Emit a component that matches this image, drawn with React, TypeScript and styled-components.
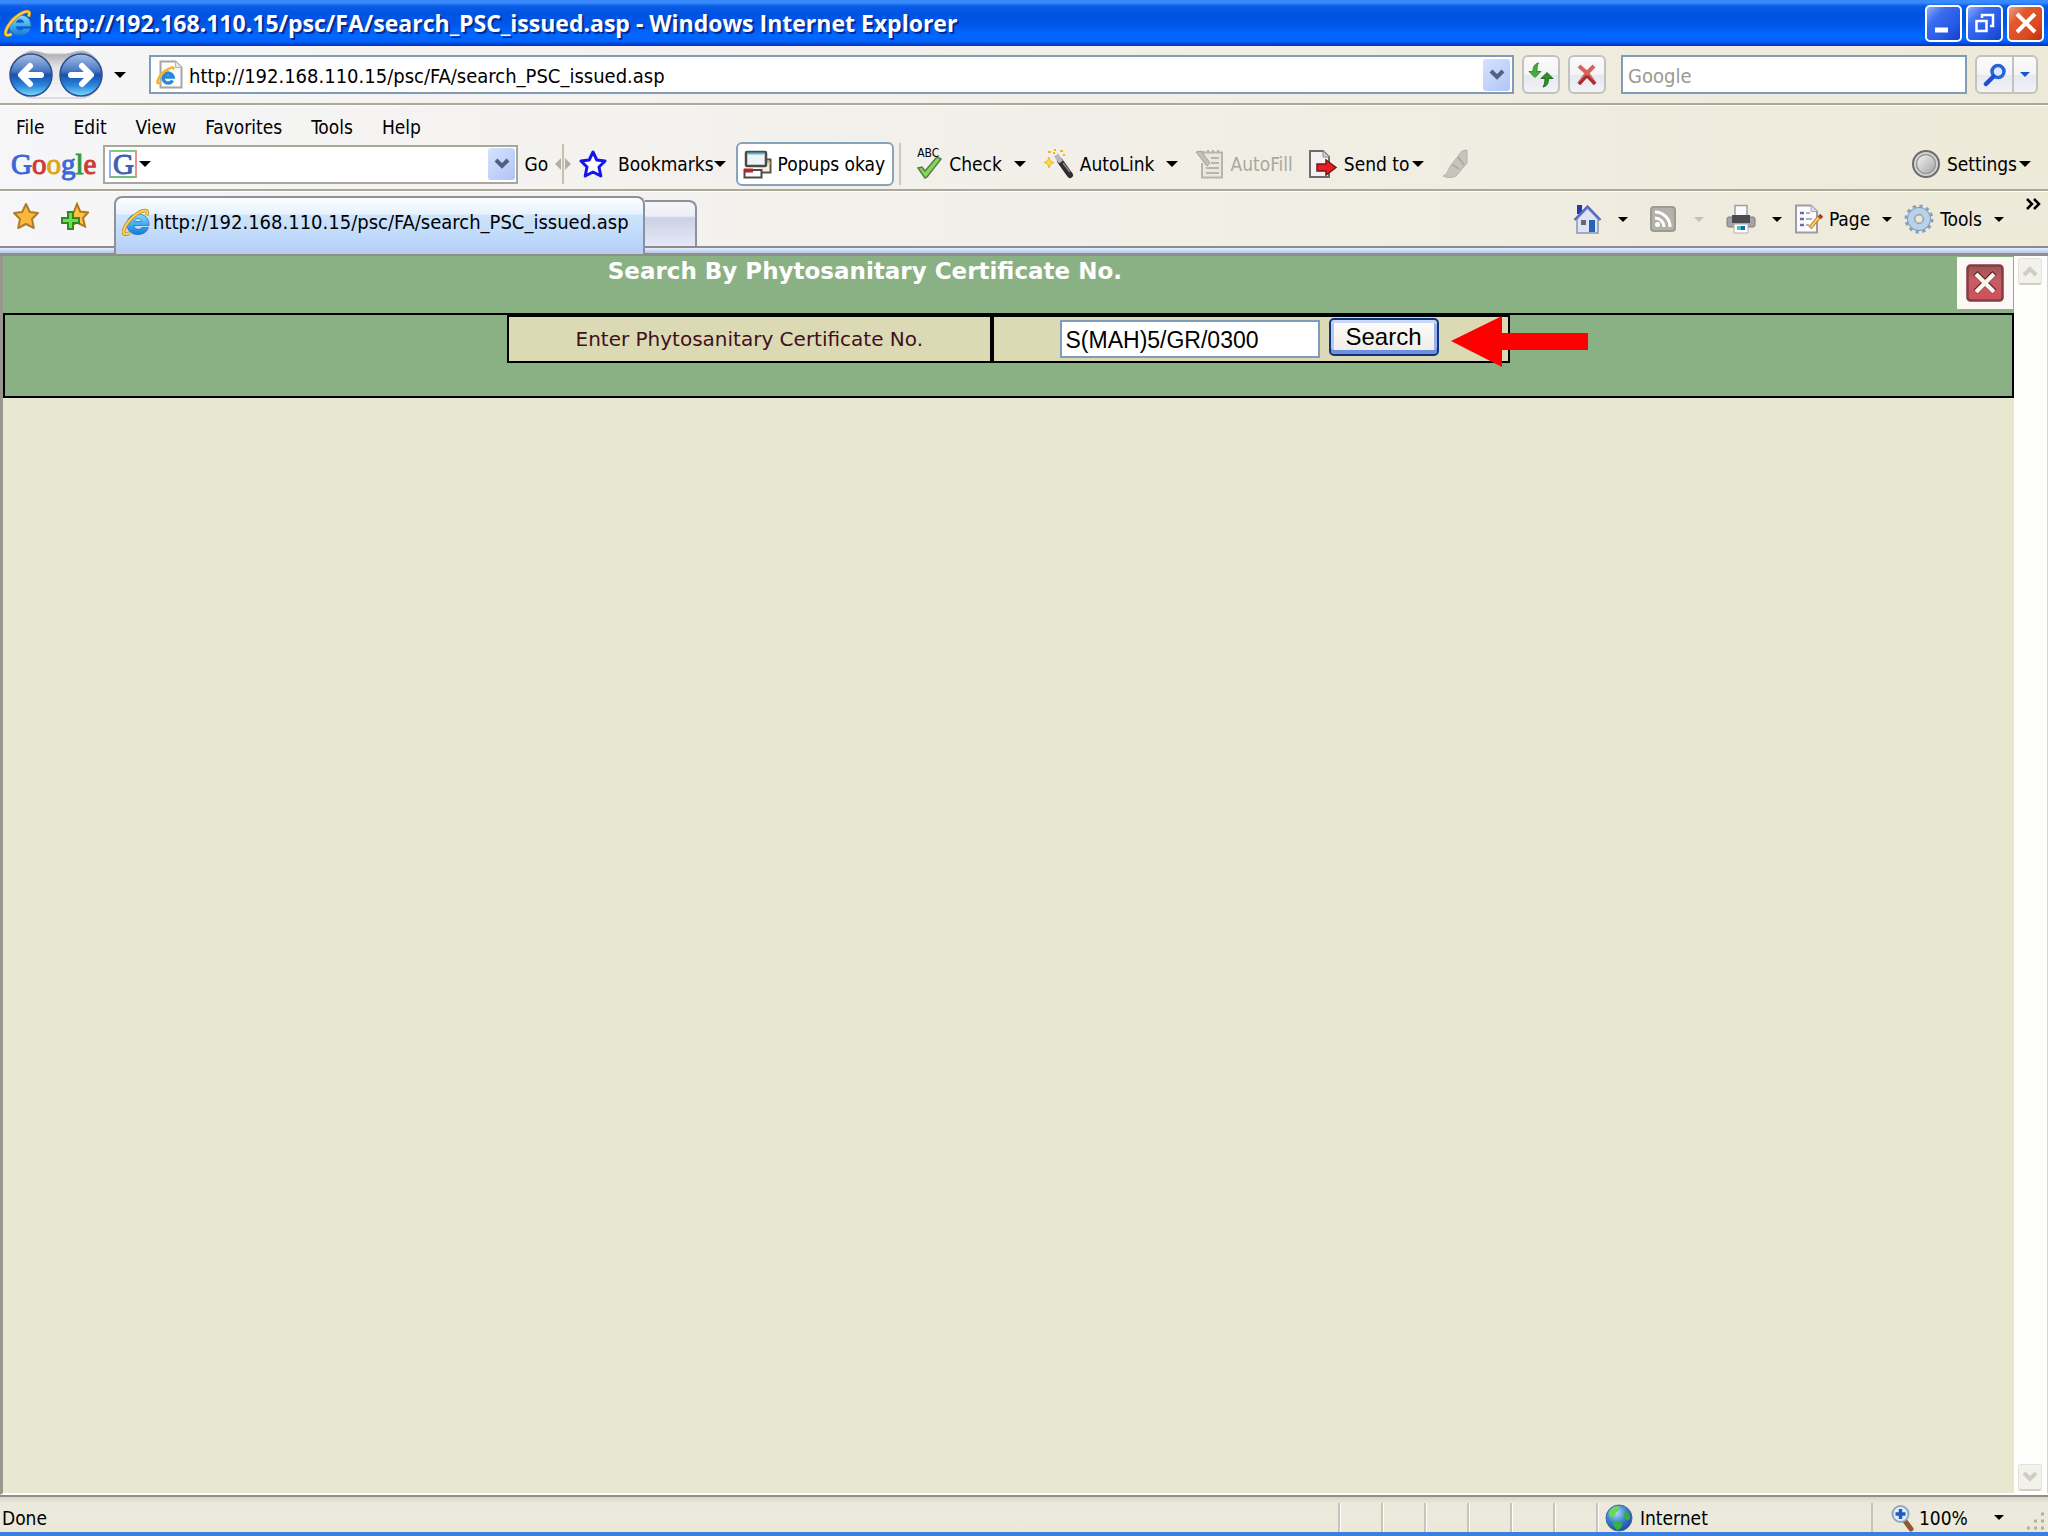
import React from "react";
import styled, { createGlobalStyle, css } from "styled-components";

const uiFont = `"DejaVu Sans Condensed", "Noto Sans", sans-serif`;
const titleFont = `"Open Sans", "Noto Sans", sans-serif`;
const pageFont = `"DejaVu Sans", Verdana, sans-serif`;
const arial = `"Liberation Sans", Arial, sans-serif`;

const GlobalStyle = createGlobalStyle`
  *, *::before, *::after { box-sizing: border-box; }
  body { margin: 0; background: #e8e7d0; }
  button, input { font: inherit; color: inherit; margin: 0; padding: 0; border: 0; background: none; border-radius: 0; }
  input { outline: 0; min-width: 0; }
  svg { display: block; flex: none; }
`;

const Window = styled.div`
  display: flex;
  flex-direction: column;
  min-height: 100vh;
  font-family: ${uiFont};
  font-size: 19px;
  line-height: 24px;
  color: #000;
  white-space: nowrap;
`;

/* ---------- title bar ---------- */

const TitleBar = styled.header`
  display: flex;
  align-items: center;
  height: 46px;
  padding: 0 4px;
  background: linear-gradient(to bottom, #3a8bff 0, #3688fa 3px, #0a5be8 6px, #0053e0 14px, #0056e8 24px, #0066ff 34px, #0066ff 41px, #0038c8 45px, #003ad0 46px);
`;

const Title = styled.h1`
  flex: 1;
  margin: 0 0 0 7px;
  font-family: ${titleFont};
  font-weight: 700;
  font-size: 23px;
  line-height: 32px;
  color: #fff;
  text-shadow: 2px 2px 0 #0a2a8a;
`;

const WindowButtons = styled.div`
  display: flex;
  gap: 4px;
`;

const WindowButton = styled.button<{ $close?: boolean }>`
  display: grid;
  place-items: center;
  width: 37px;
  height: 37px;
  border: 2px solid #fff;
  border-radius: 5px;
  background: ${(p) =>
    p.$close
      ? "linear-gradient(135deg, #f0a08a 0, #e2582f 30%, #dc4a20 70%, #b83010 100%)"
      : "linear-gradient(135deg, #8fb0f8 0, #3a6cf0 30%, #2458e6 70%, #1a3fc0 100%)"};
`;

/* ---------- bars ---------- */

const bar = css`
  display: flex;
  align-items: center;
  background: linear-gradient(to right, #f6f6f8 0, #f2f0ea 45%, #efecdf 80%, #eeead9 100%);
`;

const NavBar = styled.div`
  ${bar}
  height: 59px;
  padding: 0 10px 0 8px;
  border-bottom: 2px solid #aca899;
`;

const Triangle = styled.span<{ $size?: number; $color?: string }>`
  flex: none;
  width: 0;
  height: 0;
  border: ${(p) => p.$size ?? 6}px solid transparent;
  border-top-color: ${(p) => p.$color ?? "#000"};
  border-bottom: 0;
`;

const PlainButton = styled.button<{ $left?: number }>`
  display: flex;
  align-items: center;
  height: 40px;
  margin-left: ${(p) => p.$left ?? 0}px;
`;

const FieldBox = styled.label<{ $edge: string }>`
  display: flex;
  align-items: center;
  height: 39px;
  padding: 0 2px 0 5px;
  border: 2px solid ${(p) => p.$edge};
  background: #fff;
`;

const AddressBox = styled(FieldBox)`
  flex: 1;
  margin-left: 23px;
`;

const SearchBox = styled(FieldBox)`
  width: 346px;
  margin: 0 8px 0 15px;
`;

const GoogleBox = styled(FieldBox)`
  width: 415px;
  margin-left: 7px;
  padding: 0 1px 0 4px;
`;

const Field = styled.input`
  flex: 1;
  height: 30px;
  padding: 2px 0 0 6px;
  font-size: 20px;
  &::placeholder { color: #9a9a90; opacity: 1; }
`;

const SearchField = styled(Field)`
  padding-left: 0;
`;

const ComboArrow = styled.button`
  display: grid;
  place-items: center;
  width: 27px;
  height: 32px;
  border-radius: 3px;
  background: linear-gradient(135deg, #d6e2fd 0, #c0d0fa 60%, #b0c4f4 100%);
`;

const SmallButton = styled.button`
  display: grid;
  place-items: center;
  width: 38px;
  height: 39px;
  margin-left: 8px;
  border: 2px solid #c2c2c0;
  border-radius: 6px;
  background: linear-gradient(to bottom, #fbfbfb 0, #f4f4f6 50%, #e6e8f0 52%, #f2f2f6 100%);
`;

const SplitButton = styled.div`
  display: flex;
  height: 39px;
  border: 2px solid #c2c2c0;
  border-radius: 6px;
  background: linear-gradient(to bottom, #fbfbfb 0, #f4f4f6 50%, #e6e8f0 52%, #f2f2f6 100%);
`;

const SplitPart = styled.button<{ $wide?: boolean }>`
  display: grid;
  place-items: center;
  width: ${(p) => (p.$wide ? 37 : 22)}px;
  border-right: ${(p) => (p.$wide ? "2px solid #c2c2c0" : "0")};
`;

const MenuBar = styled.nav`
  ${bar}
  gap: 29px;
  height: 37px;
  padding: 6px 16px 0;
  border-top: 1px solid #fff;
`;

const GoogleBar = styled.div`
  ${bar}
  height: 49px;
  padding: 0 17px 3px 11px;
  border-bottom: 2px solid #aca899;
`;

const Logo = styled.span`
  font-family: "Liberation Serif", "Times New Roman", serif;
  font-size: 29px;
  line-height: 36px;
  -webkit-text-stroke: 1px currentColor;
`;

const Letter = styled.span<{ $c: string }>`
  color: ${(p) => p.$c};
`;

const GBadge = styled.span`
  display: grid;
  place-items: center;
  width: 28px;
  height: 28px;
  margin-right: 2px;
  border: 2px solid;
  border-color: #7cc98a #f0908a #6fc07c #8fb0f0;
  font-family: "Liberation Serif", "Times New Roman", serif;
  font-size: 29px;
  line-height: 24px;
  color: #3c5fb8;
  -webkit-text-stroke: 1px currentColor;
`;

const Separator = styled.span`
  width: 2px;
  height: 42px;
  margin: 0 12px 0 5px;
  background: #cdcabb;
`;

const Splitter = styled.span`
  margin: 0 8px 0 7px;
`;

const Tool = styled.button<{ $gap?: number; $left?: number; $disabled?: boolean }>`
  display: flex;
  align-items: center;
  gap: ${(p) => p.$gap ?? 6}px;
  height: 44px;
  margin-left: ${(p) => p.$left ?? 0}px;
  color: ${(p) => (p.$disabled ? "#aaa89c" : "#000")};
`;

const PressedTool = styled(Tool)`
  padding: 0 7px 0 5px;
  border: 2px solid #86a5bd;
  border-radius: 6px;
  background: #fff;
`;

const Caret = styled(Triangle)<{ $left?: number }>`
  margin-left: ${(p) => p.$left ?? 0}px;
`;

const Push = styled.span`
  flex: 1;
`;

/* ---------- tab row ---------- */

const TabRow = styled.div`
  ${bar}
  align-items: stretch;
  height: 57px;
  border-top: 1px solid #fff;
  border-bottom: 2px solid #8a8c90;
  padding-left: 12px;
`;

const TabIcons = styled.div`
  display: flex;
  align-items: center;
  gap: 21px;
  width: 102px;
  padding-bottom: 6px;
`;

const Tab = styled.button`
  display: flex;
  align-items: center;
  gap: 3px;
  width: 531px;
  height: 58px;
  margin-top: 4px;
  padding: 0 8px 8px 6px;
  border: 2px solid #8c929c;
  border-bottom: 0;
  border-radius: 8px 8px 0 0;
  background: linear-gradient(to bottom, #fdfefe 0, #e8f3fd 28%, #cfe4fa 31%, #bcd8fa 75%, #b9cbf2 100%);
  font-size: 20px;
  position: relative;
`;

const NewTab = styled.button`
  width: 52px;
  margin-top: 8px;
  border: 2px solid #8c929c;
  border-left: 0;
  border-bottom: 0;
  border-radius: 0 8px 0 0;
  background: linear-gradient(to bottom, #f6f6fa 0, #eeeef6 32%, #ccd0e4 36%, #e6e8f8 100%);
`;

const CommandBar = styled.div`
  display: flex;
  flex: 1;
  align-items: center;
  justify-content: flex-end;
  padding: 0 7px 0 0;
`;

const Command = styled.button<{ $left: number; $gap: number }>`
  display: flex;
  align-items: center;
  gap: ${(p) => p.$gap}px;
  height: 40px;
  margin-left: ${(p) => p.$left}px;
`;

const IconText = styled.span`
  display: flex;
  align-items: center;
  gap: 6px;
`;

const Overflow = styled.button`
  align-self: flex-start;
  margin-left: 22px;
  padding-top: 6px;
`;

const TabShelf = styled.div`
  height: 8px;
  border-bottom: 3px solid #8f8f86;
  background: linear-gradient(to bottom, #e6effc, #b4c6f0);
`;

/* ---------- document ---------- */

const Viewport = styled.main`
  display: flex;
  flex: 1;
  border-left: 3px solid #9a968c;
  border-bottom: 2px solid #fff;
  background: #e8e7d0;
`;

const Document = styled.div`
  flex: 1;
  font-family: ${pageFont};
`;

const Heading = styled.div`
  display: grid;
  grid-template-columns: 6fr 1fr;
  height: 57px;
  background: #8ab184;
`;

const HeadingText = styled.h2`
  margin: 0;
  font-size: 23px;
  line-height: 30px;
  font-weight: 700;
  text-align: center;
  color: #fff;
`;

const CloseCell = styled.div`
  display: flex;
  justify-content: flex-end;
  padding: 1px 1px 0 0;
`;

const CloseButton = styled.button`
  display: grid;
  place-items: center;
  width: 56px;
  height: 52px;
  background: #fbf8f6;
`;

const Panel = styled.section`
  height: 85px;
  border: 2px solid #000;
  background: #8ab184;
`;

const SearchForm = styled.form`
  display: grid;
  grid-template-columns: 29fr 31fr;
  width: 50%;
  height: 48px;
  margin: 0 auto;
  border: 2px solid #000;
  background: #dbdab4;
`;

const LabelCell = styled.div`
  display: grid;
  place-items: center;
  border-right: 2px solid #000;
  font-size: 20px;
  color: #40101c;
`;

const InputCell = styled.div`
  position: relative;
  display: flex;
  align-items: center;
  justify-content: center;
  gap: 9px;
  padding-right: 4px;
  border-left: 2px solid #000;
  font-family: ${arial};
  font-size: 24px;
`;

const CertInput = styled.input`
  width: 260px;
  height: 38px;
  padding: 2px 4px 0;
  border: 2px solid #7f9db9;
  background: #fff;
  font-size: 23px;
`;

const SubmitButton = styled.button`
  width: 110px;
  height: 38px;
  margin-bottom: 4px;
  border: 2px solid #10347c;
  border-radius: 5px;
  background: linear-gradient(to bottom, #fdfdfb, #eeece4);
  box-shadow: inset 0 3px 0 #c8d8fa, inset 0 -4px 0 #6f8fe0, inset 3px 0 0 #b4c8f6, inset -3px 0 0 #98b0f0;
`;

const Pointer = styled.svg`
  position: absolute;
  left: calc(100% - 57px);
  top: -2px;
`;

const ScrollBar = styled.div`
  display: flex;
  flex-direction: column;
  justify-content: space-between;
  width: 34px;
  padding: 2px 6px 2px 4px;
  border-right: 1px solid #d8d4c4;
  background: #fefefc;
`;

const ScrollButton = styled.button`
  display: grid;
  place-items: center;
  width: 24px;
  height: 27px;
  border: 1px solid #e4e2d6;
  border-bottom: 2px solid #d2d0c0;
  border-radius: 3px;
  background: #f2f1ec;
`;

/* ---------- status bar ---------- */

const StatusBar = styled.footer`
  display: flex;
  align-items: stretch;
  height: 41px;
  border-top: 2px solid #8f8f86;
  border-bottom: 4px solid #3a7fe0;
  padding-left: 2px;
  background: linear-gradient(to bottom, #d6d4c6 0, #ebe9dc 6px, #ebeadb 24px, #eee6d6 100%);
`;

const StatusText = styled.span`
  flex: 1;
  padding-top: 9px;
`;

const Pane = styled.span<{ $w: number }>`
  display: flex;
  align-items: center;
  gap: 7px;
  width: ${(p) => p.$w}px;
  margin-top: 6px;
  padding-left: 7px;
  border-left: 2px solid #c8c5b4;
  box-shadow: inset 1px 0 0 #fff;
`;

const ZoomPane = styled.button`
  display: flex;
  align-items: center;
  gap: 4px;
  width: 153px;
  margin-top: 6px;
  padding-left: 18px;
  border-left: 2px solid #c8c5b4;
`;

const Grip = styled.svg`
  align-self: flex-end;
`;

/* ---------- icons ---------- */

const IEIcon = ({ size = 28, id }: { size?: number; id: string }) => (
  <svg width={size} height={size} viewBox="0 0 28 28" aria-hidden="true">
    <defs>
      <linearGradient id={id} x1="0" y1="0" x2="0" y2="1">
        <stop offset="0" stopColor="#8ad8fc" />
        <stop offset="0.55" stopColor="#3caaf0" />
        <stop offset="1" stopColor="#1a78d4" />
      </linearGradient>
    </defs>
    <path
      d="M27 17.500H12c.3 2.600 2 3.800 4.200 3.800 1.700 0 2.900-.6 3.700-1.800h6.500C25 24 21.300 26.500 16 26.500 9.600 26.500 5 22.600 5 16.400 5 10.100 9.600 6 16 6c6.800 0 11.300 4.400 11 11.500zM12.200 13.600h7.600c-.3-1.800-1.800-3-3.800-3s-3.300 1.200-3.800 3z"
      fill={`url(#${id})`}
      stroke="#2372c4"
      strokeWidth="0.800"
    />
    <path d="M24.500 7.500C26.500 3.500 25 1.500 20.500 3 13 5.500 3.500 15.500 1.700 22.500c-1 4 1.800 4.700 6 2.500" fill="none" stroke="#b9852a" strokeWidth="3.600" />
    <path d="M24.500 7.500C26.500 3.500 25 1.500 20.500 3 13 5.500 3.500 15.500 1.700 22.500c-1 4 1.800 4.700 6 2.500" fill="none" stroke="#fbd04a" strokeWidth="2.200" />
  </svg>
);

const PageIEIcon = () => (
  <svg width="27" height="30" viewBox="0 0 27 30" aria-hidden="true">
    <path d="M4.500 1.500h15l6 6v20h-21z" fill="#fdfdfd" stroke="#a8a4a4" strokeWidth="2" />
    <path d="M19.500 1.500v6h6" fill="#e8e8e8" stroke="#b8b4b4" />
    <path d="M16.500 20.500a5 5 0 1 1 .5-3.500H7" fill="none" stroke="#2788da" strokeWidth="3.500" />
    <path d="M16.500 9.500c2-2 .5-3-3-1C8 11 3 16 1.500 21c-.6 2.500 1 3 3.500 1.500" fill="none" stroke="#efb52e" strokeWidth="2.500" />
  </svg>
);

const NavOrbs = () => (
  <svg width="98" height="50" viewBox="0 0 98 50" aria-hidden="true">
    <defs>
      <linearGradient id="orb" x1="0" y1="0" x2="0" y2="1">
        <stop offset="0" stopColor="#a8c0e4" />
        <stop offset="0.4" stopColor="#4a78c4" />
        <stop offset="0.5" stopColor="#1a4fae" />
        <stop offset="0.75" stopColor="#2a86dc" />
        <stop offset="1" stopColor="#7ddcfc" />
      </linearGradient>
      <linearGradient id="cradle" x1="0" y1="0" x2="0" y2="1">
        <stop offset="0" stopColor="#a4a4a8" />
        <stop offset="0.35" stopColor="#e4e4e8" />
        <stop offset="1" stopColor="#f8f8fa" />
      </linearGradient>
    </defs>
    <path d="M23 1c9 0 12 3 18 3h16c6 0 9-3 18-3a24 24 0 0 1 0 47H23A24 24 0 0 1 23 1z" fill="url(#cradle)" stroke="#c4c4c8" />
    <circle cx="23" cy="25" r="21" fill="url(#orb)" stroke="#2d4f8e" strokeWidth="1.500" />
    <circle cx="73" cy="25" r="21" fill="url(#orb)" stroke="#2d4f8e" strokeWidth="1.500" />
    <path d="M33 25H14M22 16l-9 9 9 9" fill="none" stroke="#fff" strokeWidth="6" strokeLinecap="round" strokeLinejoin="round" />
    <path d="M63 25h19M74 16l9 9-9 9" fill="none" stroke="#fff" strokeWidth="6" strokeLinecap="round" strokeLinejoin="round" />
  </svg>
);

const Chevron = ({ color = "#4d6185", up = false }: { color?: string; up?: boolean }) => (
  <svg width="16" height="12" viewBox="0 0 16 12" aria-hidden="true">
    <path d={up ? "M2 10l6-6 6 6" : "M2 2l6 6 6-6"} fill="none" stroke={color} strokeWidth="4" />
  </svg>
);

const RefreshIcon = () => (
  <svg width="26" height="26" viewBox="0 0 26 26" aria-hidden="true">
    <path d="M10 1C6 2.500 5 5 5 9.500H1L7 15.500l6-6H9C9 6 9 3.500 10.500 1z" fill="#46ac3a" stroke="#34902c" />
    <path d="M15.500 25c4-1.500 5-4 5-8.500H25l-6-6-6 6h4c0 3.500-.5 6-2 8.500z" fill="#2f8f28" stroke="#23701d" />
  </svg>
);

const StopIcon = () => (
  <svg width="22" height="22" viewBox="0 0 22 22" aria-hidden="true">
    <path d="M3 2l8 7 7-7M11 9l8 11M11 9L3 20" fill="none" stroke="#d8625e" strokeWidth="4" />
    <path d="M11 12l8 8M11 12l-8 8" stroke="#a82c30" strokeWidth="3" />
  </svg>
);

const MagnifierIcon = () => (
  <svg width="24" height="24" viewBox="0 0 24 24" aria-hidden="true">
    <circle cx="15" cy="8.500" r="6" fill="#dbe9fc" stroke="#2a62dc" strokeWidth="3.500" />
    <path d="M10.500 13.500L3 21" stroke="#1d4fd0" strokeWidth="4.500" strokeLinecap="round" />
  </svg>
);

const StarIcon = ({ fill, stroke, width = 2 }: { fill: string; stroke: string; width?: number }) => (
  <svg width="28" height="28" viewBox="0 0 28 28" aria-hidden="true">
    <path d="M14 2l3.800 8L26 11l-6 6 1.800 9L14 22l-7.800 4L8 17l-6-6 8.200-1z" fill={fill} stroke={stroke} strokeWidth={width} strokeLinejoin="round" />
  </svg>
);

const AddFavoriteIcon = () => (
  <svg width="28" height="28" viewBox="0 0 28 28" aria-hidden="true">
    <path d="M16 2l3.200 7.500L27 10.500l-5 5.500 2 8.500-8-4-6 3 1-8-4-5 6-.8z" fill="#fdc244" stroke="#b07a1c" strokeWidth="2" />
    <path d="M7 10h5v6h6v5h-6v6H7v-6H1v-5h6z" fill="#6fdc54" stroke="#2b8c20" strokeWidth="2" />
  </svg>
);

const PopupIcon = () => (
  <svg width="29" height="29" viewBox="0 0 29 29" aria-hidden="true">
    <path d="M20 9.500h7.500v13H12" fill="#f6f2dc" stroke="#55554a" strokeWidth="2" />
    <path d="M24 11l3 3" stroke="#e0c050" strokeWidth="2" />
    <rect x="1.500" y="20" width="17" height="7.500" fill="#fff" stroke="#4a4a4a" strokeWidth="2" />
    <path d="M1 20.500h9" stroke="#b02828" strokeWidth="4" />
    <rect x="3" y="2" width="20" height="14" rx="1" fill="#eef3f6" stroke="#4a4a4a" strokeWidth="2.500" />
    <path d="M4.500 3.500h17" stroke="#5fb4dc" strokeWidth="2" />
  </svg>
);

const CheckBox = styled.span`
  display: flex;
  flex-direction: column;
  width: 30px;
  height: 32px;
`;

const Abc = styled.span`
  font-size: 12px;
  line-height: 11px;
  height: 9px;
`;

const CheckMark = () => (
  <svg width="30" height="22" viewBox="0 0 30 22" aria-hidden="true">
    <path d="M5 11l4-1 3 4L24 0l4 2-14 18-2 1z" fill="#86d858" stroke="#5d7a4c" strokeWidth="1.500" />
  </svg>
);

const WandIcon = () => (
  <svg width="30" height="30" viewBox="0 0 30 30" aria-hidden="true">
    <path d="M16 12l10 14" stroke="#2d2d2d" strokeWidth="6" strokeLinecap="round" />
    <path d="M12 6l5 7" stroke="#b8b8b8" strokeWidth="5" />
    <path d="M19 14l7 9" stroke="#8c8c8c" strokeWidth="1.500" />
    <path d="M5 8l1.500 4L10 13.500 6.500 15 5 19l-1.500-4L0 13.500 3.500 12z" fill="#fbdc3c" stroke="#e8bc28" />
    <path d="M4 3h3M10 1h2M16 2h3M19 6h2M9 4h2" stroke="#eeb42c" strokeWidth="2" />
  </svg>
);

const AutoFillIcon = () => (
  <svg width="30" height="30" viewBox="0 0 30 30" aria-hidden="true">
    <path d="M9 3.500h19v25H8V14" fill="#e8e7e0" stroke="#b8b6ac" strokeWidth="2" />
    <path d="M9 2v3M14 1v3M19 1v3M24 1v3" stroke="#b4b2a8" strokeWidth="2" />
    <path d="M17 9h8M17 14h8M12 19h13M12 24h13" stroke="#b8b6ac" strokeWidth="2" />
    <path d="M2 3l5-1 9 12-3 3z" fill="#c2c0b8" stroke="#a4a298" />
  </svg>
);

const SendIcon = () => (
  <svg width="30" height="30" viewBox="0 0 30 30" aria-hidden="true">
    <path d="M2 2h13l6 6v20H2z" fill="#f1f1f1" stroke="#6c6c6c" strokeWidth="2" />
    <path d="M15 2v6h6" fill="#d0d0d0" stroke="#8c8c8c" />
    <path d="M9 15h9v-4l10 7.500L18 26v-4H9z" fill="#e81c24" stroke="#7c1418" strokeWidth="1.500" />
  </svg>
);

const PenIcon = () => (
  <svg width="28" height="30" viewBox="0 0 28 30" aria-hidden="true">
    <path d="M1 27c5-1 5-8 9-12L20 2l5-1v13L14 27c-4 2-9 2-13 0z" fill="#c6c4bc" stroke="#b4b2a8" />
    <path d="M10 15l7 5M16 8l6 8" stroke="#a8a69c" strokeWidth="1.500" />
  </svg>
);

const SettingsIcon = () => (
  <svg width="30" height="30" viewBox="0 0 30 30" aria-hidden="true">
    <defs>
      <linearGradient id="disc" x1="0" y1="0" x2="1" y2="1">
        <stop offset="0" stopColor="#f6f6f6" />
        <stop offset="1" stopColor="#a4a4a4" />
      </linearGradient>
    </defs>
    <circle cx="15" cy="15" r="13" fill="#d4d4d4" stroke="#6c6c6c" strokeWidth="2" />
    <circle cx="15" cy="15" r="9.500" fill="url(#disc)" stroke="#989898" strokeWidth="1.500" />
  </svg>
);

const HomeIcon = () => (
  <svg width="29" height="30" viewBox="0 0 29 30" aria-hidden="true">
    <path d="M4 1h5v9H4z" fill="#2438b0" />
    <path d="M4 15L14.500 4 25 15v14H4z" fill="#dfe4f4" stroke="#8c94b4" strokeWidth="1.500" />
    <path d="M1.500 16L14.500 2.500 27.500 16" fill="none" stroke="#5a6cc0" strokeWidth="2.500" />
    <path d="M16 16h6v12h-6z" fill="#2c62b4" />
    <path d="M8 16h5v5H8z" fill="#646878" />
  </svg>
);

const FeedIcon = () => (
  <svg width="26" height="26" viewBox="0 0 26 26" aria-hidden="true">
    <rect x="1" y="1" width="24" height="24" rx="3" fill="#b2b1aa" stroke="#9c9b94" strokeWidth="2" />
    <circle cx="7.500" cy="18.500" r="2.500" fill="#fff" />
    <path d="M5 12a9 9 0 0 1 9 9M5 6a15 15 0 0 1 15 15" fill="none" stroke="#fff" strokeWidth="3" />
  </svg>
);

const PrinterIcon = () => (
  <svg width="30" height="30" viewBox="0 0 30 30" aria-hidden="true">
    <path d="M9 12V1.500h12V12" fill="#fafafa" stroke="#a0a0a0" strokeWidth="1.500" />
    <rect x="1" y="13" width="28" height="10" rx="2" fill="#a4a4a8" stroke="#7c7c80" />
    <path d="M6 11h18v8H6z" fill="#4c4c50" />
    <path d="M8 20h14v9H8z" fill="#fff" stroke="#b0b0b0" />
    <path d="M11 22h4v4h-4z" fill="#3cc8c0" />
    <path d="M15 22h4v4h-4z" fill="#2464b4" />
  </svg>
);

const PageIcon = () => (
  <svg width="29" height="30" viewBox="0 0 29 30" aria-hidden="true">
    <path d="M2 1.500h15l6 6v21H2z" fill="#fbfbfd" stroke="#9c9ca4" strokeWidth="2" />
    <path d="M17 1.500v6h6" fill="#e0e0e8" stroke="#a8a8b0" />
    <path d="M6 9h4M6 15h4M6 21h4" stroke="#6c6ca4" strokeWidth="2.500" />
    <path d="M12 9h4M12 15h6M12 21h3" stroke="#b0b0c0" strokeWidth="2" />
    <path d="M16 24L25 13" stroke="#c08430" strokeWidth="4" />
    <path d="M16.500 23.500l8-10" stroke="#fbd460" strokeWidth="2" />
    <path d="M25 11l3 3" stroke="#a83c34" strokeWidth="3.500" />
  </svg>
);

const GearIcon = () => (
  <svg width="30" height="30" viewBox="0 0 30 30" aria-hidden="true">
    <circle cx="15" cy="15" r="12.500" fill="none" stroke="#88a4bc" strokeWidth="4" strokeDasharray="3.300 3.240" />
    <circle cx="15" cy="15" r="8" fill="none" stroke="#7f9cb8" strokeWidth="8" />
    <circle cx="15" cy="15" r="8" fill="none" stroke="#b8d2ea" strokeWidth="6" />
    <circle cx="15" cy="15" r="4" fill="#f2e8cc" stroke="#9cb0c0" />
  </svg>
);

const CloseIcon = () => (
  <svg width="38" height="38" viewBox="0 0 38 38" aria-hidden="true">
    <defs>
      <linearGradient id="closeRed" x1="0" y1="0" x2="0" y2="1">
        <stop offset="0" stopColor="#9c5454" />
        <stop offset="0.45" stopColor="#c85c64" />
        <stop offset="1" stopColor="#d0505c" />
      </linearGradient>
    </defs>
    <rect x="1.500" y="1.500" width="35" height="35" rx="3" fill="url(#closeRed)" stroke="#843c44" strokeWidth="2.500" />
    <path d="M9.500 9l19 19M28.500 9l-19 19" stroke="#4c2024" strokeWidth="6" />
    <path d="M10 10l18 18M28 10L10 28" stroke="#fdf4ec" strokeWidth="4.500" />
  </svg>
);

const GlobeIcon = () => (
  <svg width="28" height="28" viewBox="0 0 28 28" aria-hidden="true">
    <defs>
      <radialGradient id="sea" cx="0.4" cy="0.300" r="0.800">
        <stop offset="0" stopColor="#a8dcfc" />
        <stop offset="0.5" stopColor="#3a82d0" />
        <stop offset="1" stopColor="#1c3c88" />
      </radialGradient>
    </defs>
    <circle cx="14" cy="14" r="13" fill="url(#sea)" stroke="#44649c" />
    <path d="M4 8c3-5 7-6 10-6-1 3 1 4-2 6s-1 4-4 5-4-1-4-5z" fill="#6cd858" />
    <path d="M20 8c3 0 5 3 5 7-2 2-4 1-5-1s-2-4 0-6z" fill="#3cac38" />
    <path d="M8 18c3-1 6-1 9 1 1 3-2 6-4 7-3-1-5-4-5-8z" fill="#34b43c" />
  </svg>
);

const ZoomIcon = () => (
  <svg width="24" height="28" viewBox="0 0 24 28" aria-hidden="true">
    <path d="M14 17l6 8" stroke="#8c5834" strokeWidth="5" strokeLinecap="round" />
    <circle cx="9.500" cy="10" r="8" fill="#e0effc" stroke="#98a4bc" strokeWidth="2" />
    <path d="M9.500 5v10M4.500 10h10" stroke="#1c5cc8" strokeWidth="3.500" />
  </svg>
);

const url = "http://192.168.110.15/psc/FA/search_PSC_issued.asp";
const menus = ["File", "Edit", "View", "Favorites", "Tools", "Help"];

export default function App() {
  return (
    <Window>
      <GlobalStyle />
      <TitleBar>
        <IEIcon id="ieTitle" />
        <Title>{url} - Windows Internet Explorer</Title>
        <WindowButtons>
          <WindowButton aria-label="Minimize">
            <svg width="24" height="24" viewBox="0 0 24 24"><path d="M3 19h13" stroke="#fff" strokeWidth="5" /></svg>
          </WindowButton>
          <WindowButton aria-label="Restore">
            <svg width="24" height="24" viewBox="0 0 24 24">
              <path d="M9 7V4h11v11h-3" fill="none" stroke="#fff" strokeWidth="2.500" />
              <rect x="3.500" y="10" width="10" height="10" fill="none" stroke="#fff" strokeWidth="2.500" />
            </svg>
          </WindowButton>
          <WindowButton $close aria-label="Close">
            <svg width="24" height="24" viewBox="0 0 24 24"><path d="M3 3l18 18M21 3L3 21" stroke="#fff" strokeWidth="4" /></svg>
          </WindowButton>
        </WindowButtons>
      </TitleBar>

      <NavBar>
        <PlainButton aria-label="Back and forward"><NavOrbs /></PlainButton>
        <PlainButton $left={8} aria-label="Recent pages"><Triangle /></PlainButton>
        <AddressBox $edge="#7f9db9">
          <PageIEIcon />
          <Field aria-label="Address" defaultValue={url} />
          <ComboArrow type="button" aria-label="Show addresses"><Chevron /></ComboArrow>
        </AddressBox>
        <SmallButton aria-label="Refresh"><RefreshIcon /></SmallButton>
        <SmallButton aria-label="Stop"><StopIcon /></SmallButton>
        <SearchBox $edge="#7f9db9">
          <SearchField aria-label="Search the web" placeholder="Google" />
        </SearchBox>
        <SplitButton>
          <SplitPart $wide aria-label="Search"><MagnifierIcon /></SplitPart>
          <SplitPart aria-label="Search options"><Triangle $size={5} $color="#1d56c8" /></SplitPart>
        </SplitButton>
      </NavBar>

      <MenuBar>
        {menus.map((m) => (
          <button key={m}>{m}</button>
        ))}
      </MenuBar>

      <GoogleBar>
        <Logo>
          <Letter $c="#3b68d8">G</Letter>
          <Letter $c="#d03a34">o</Letter>
          <Letter $c="#d8a81c">o</Letter>
          <Letter $c="#3b68d8">g</Letter>
          <Letter $c="#2f9a3c">l</Letter>
          <Letter $c="#d03a34">e</Letter>
        </Logo>
        <GoogleBox $edge="#aaa79c">
          <GBadge>G</GBadge>
          <Triangle $size={6} />
          <Field aria-label="Google search" />
          <ComboArrow type="button" aria-label="Search history"><Chevron /></ComboArrow>
        </GoogleBox>
        <Tool $left={6}>Go</Tool>
        <Splitter>
          <svg width="16" height="42" viewBox="0 0 16 42" aria-hidden="true">
            <path d="M8 1v40" stroke="#c4c1b2" strokeWidth="2" />
            <path d="M6 15v12l-6-6zM10 15v12l6-6z" fill="#b4b1a4" />
          </svg>
        </Splitter>
        <Tool $gap={11}>
          <StarIcon fill="#fff" stroke="#1414f0" width={3} />
          <span>Bookmarks</span>
        </Tool>
        <Caret $size={6} />
        <PressedTool $left={10}>
          <PopupIcon />
          <span>Popups okay</span>
        </PressedTool>
        <Separator />
        <Tool>
          <CheckBox><Abc>ABC</Abc><CheckMark /></CheckBox>
          <span>Check</span>
        </Tool>
        <Caret $size={6} $left={12} />
        <Tool $left={18}><WandIcon /><span>AutoLink</span></Tool>
        <Caret $size={6} $left={12} />
        <Tool $left={16} $disabled><AutoFillIcon /><span>AutoFill</span></Tool>
        <Tool $left={15}><SendIcon /><span>Send to</span></Tool>
        <Caret $size={6} $left={2} />
        <Tool $left={18} aria-label="Highlight"><PenIcon /></Tool>
        <Push />
        <Tool><SettingsIcon /><span>Settings</span></Tool>
        <Caret $size={6} $left={2} />
      </GoogleBar>

      <TabRow>
        <TabIcons>
          <StarIcon fill="#fcb83c" stroke="#b07c28" />
          <AddFavoriteIcon />
        </TabIcons>
        <Tab>
          <IEIcon id="ieTab" />
          <span>{url}</span>
        </Tab>
        <NewTab aria-label="New tab" />
        <CommandBar>
          <Command $left={0} $gap={16} aria-label="Home"><HomeIcon /><Triangle $size={5} /></Command>
          <Command $left={22} $gap={18} aria-label="Feeds"><FeedIcon /><Triangle $size={5} $color="#c4c2b8" /></Command>
          <Command $left={22} $gap={16} aria-label="Print"><PrinterIcon /><Triangle $size={5} /></Command>
          <Command $left={12} $gap={12}>
            <IconText><PageIcon />Page</IconText>
            <Triangle $size={5} />
          </Command>
          <Command $left={12} $gap={12}>
            <IconText><GearIcon />Tools</IconText>
            <Triangle $size={5} />
          </Command>
          <Overflow aria-label="More commands">
            <svg width="15" height="12" viewBox="0 0 15 12"><path d="M1 1l5 5-5 5M8 1l5 5-5 5" fill="none" stroke="#000" strokeWidth="2.500" /></svg>
          </Overflow>
        </CommandBar>
      </TabRow>
      <TabShelf />

      <Viewport>
        <Document>
          <Heading>
            <HeadingText>Search By Phytosanitary Certificate No.</HeadingText>
            <CloseCell>
              <CloseButton aria-label="Close"><CloseIcon /></CloseButton>
            </CloseCell>
          </Heading>
          <Panel>
            <SearchForm onSubmit={(e) => e.preventDefault()}>
              <LabelCell>
                <label htmlFor="cert">Enter Phytosanitary Certificate No.</label>
              </LabelCell>
              <InputCell>
                <CertInput id="cert" defaultValue="S(MAH)5/GR/0300" />
                <SubmitButton type="submit">Search</SubmitButton>
                <Pointer width="137" height="52" viewBox="0 0 137 52" aria-hidden="true">
                  <path d="M0 26L51 1v17h86v17H51v17z" fill="#fe0000" />
                </Pointer>
              </InputCell>
            </SearchForm>
          </Panel>
        </Document>
        <ScrollBar>
          <ScrollButton aria-label="Scroll up"><Chevron up color="#cfcdc4" /></ScrollButton>
          <ScrollButton aria-label="Scroll down"><Chevron color="#cfcdc4" /></ScrollButton>
        </ScrollBar>
      </Viewport>

      <StatusBar>
        <StatusText>Done</StatusText>
        <Pane $w={43} />
        <Pane $w={43} />
        <Pane $w={43} />
        <Pane $w={43} />
        <Pane $w={43} />
        <Pane $w={43} />
        <Pane $w={275}><GlobeIcon />Internet</Pane>
        <ZoomPane>
          <ZoomIcon />
          <span>100%</span>
          <Caret $size={5} $left={22} />
        </ZoomPane>
        <Grip width="24" height="22" viewBox="0 0 24 22" aria-hidden="true">
          <path d="M17 4h3M17 11h3M10 11h3M17 18h3M10 18h3M3 18h3" stroke="#b4b09c" strokeWidth="3" />
        </Grip>
      </StatusBar>
    </Window>
  );
}
